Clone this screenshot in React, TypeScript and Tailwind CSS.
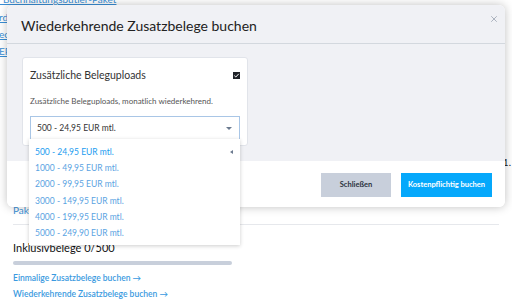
import { X } from 'lucide-react';

const options = [
  '500 - 24,95 EUR mtl.',
  '1000 - 49,95 EUR mtl.',
  '2000 - 99,95 EUR mtl.',
  '3000 - 149,95 EUR mtl.',
  '4000 - 199,95 EUR mtl.',
  '5000 - 249,90 EUR mtl.',
];

export default function App() {
  return (
    <div className="relative w-[512px] h-[306px] overflow-hidden bg-white font-['Lato',sans-serif]">
      {/* Page behind the modal */}
      <div className="flex flex-col">
        <a className="-mt-[7px] -ml-[3px] text-[10px] leading-[12px] text-[#3a8fd6] underline">
          r Buchhaltungsbutler-Paket
        </a>
        <div className="flex flex-col mt-[3.5px] -ml-[1px] text-[10px] leading-[17px] text-[#3a8fd6] underline">
          <span>rd</span>
          <span>ec</span>
          <span>EP</span>
        </div>
        <div className="flex justify-end pr-[1px] mt-[96px] text-[10px] leading-[12px] text-[#222]">1.</div>
        <a className="ml-[13px] mt-[36px] text-[10px] leading-[12px] text-[#3a8fd6]">Paket</a>
        <div className="mx-[13px] mt-[8px] h-px bg-[#e6e8ec]" />
        <div className="ml-[13px] mt-[16px] text-[11px] leading-[14px] text-[#111]">Inklusivbelege 0/500</div>
        <div className="ml-[13px] mt-[6px] w-[219px] h-[4px] rounded-full bg-[#c8cfdb]" />
        <a className="ml-[13px] mt-[7px] text-[8.5px] leading-[12px] font-semibold text-[#3a9ae0]">
          Einmalige Zusatzbelege buchen →
        </a>
        <a className="ml-[13px] mt-[4px] text-[8.5px] leading-[12px] font-semibold text-[#3a9ae0]">
          Wiederkehrende Zusatzbelege buchen →
        </a>
      </div>

      {/* Modal */}
      <div className="absolute left-[7px] top-[5px] w-[498px] h-[202px] flex flex-col rounded-[6px] overflow-hidden bg-white shadow-[0_0_10px_rgba(0,0,0,0.25)]">
        <div className="h-[39px] flex items-center justify-between pl-[14px] pr-[6px] bg-[#f0f1f5] border-b border-[#d3d8de]">
          <h2 className="text-[14px] text-[#222] mt-[2px]">Wiederkehrende Zusatzbelege buchen</h2>
          <X size={10} strokeWidth={1.6} className="text-[#8a94a3] -mt-[10px]" />
        </div>
        <div className="h-[117px] bg-[#f0f1f5] pt-[13px] pl-[15px]">
          <div className="w-[226px] h-[89px] rounded-[3px] bg-white border border-[#e1e4ea] px-[7px] pt-[9px]">
            <div className="flex items-center justify-between">
              <span className="text-[10.5px] leading-[16px] text-[#333]">Zusätzliche Beleguploads</span>
              <span className="w-[7px] h-[7px] bg-[#1f2228] flex items-center justify-center">
                <svg width="7" height="7" viewBox="0 0 7 7">
                  <path d="M1.3 3.6 L2.8 5 L5.8 1.8" fill="none" stroke="white" strokeWidth="1" />
                </svg>
              </span>
            </div>
            <p className="mt-[12px] text-[8px] leading-[12px] text-[#555]">
              Zusätzliche Beleguploads, monatlich wiederkehrend.
            </p>
            <div className="mt-[9px] h-[24px] flex items-center justify-between px-[6px] border border-[#a9c6e6] bg-white">
              <span className="text-[8.5px] text-[#333]">500 - 24,95 EUR mtl.</span>
              <span className="w-0 h-0 border-x-[3px] border-x-transparent border-t-[3px] border-t-[#6b7a8f] mr-[1px]" />
            </div>
          </div>
        </div>
        <div className="flex-1 flex items-center justify-end gap-[10px] pr-[13px] pt-[1px] bg-white">
          <button className="w-[70px] h-[24px] bg-[#c8cfdb] text-[7.5px] font-bold text-[#2b3340]">Schließen</button>
          <button className="w-[91px] h-[24px] bg-[#05a8fb] text-[7.5px] font-bold text-white">Kostenpflichtig buchen</button>
        </div>
      </div>

      {/* Open dropdown list */}
      <div className="absolute left-[29px] top-[139px] w-[211px] flex flex-col pt-[5px] pb-[3px] bg-white shadow-[0_1px_4px_rgba(0,0,0,0.2)]">
        {options.map((o, i) => (
          <div key={o} className="h-[16.3px] flex items-center justify-between pl-[6px] pr-[7px]">
            <span className={i === 0 ? 'text-[8.5px] text-[#1a9cf0]' : 'text-[8.5px] text-[#5aa3e2]'}>{o}</span>
            {i === 0 && <span className="w-0 h-0 border-y-[2.5px] border-y-transparent border-r-[3px] border-r-[#6b7a8f]" />}
          </div>
        ))}
      </div>
    </div>
  );
}
